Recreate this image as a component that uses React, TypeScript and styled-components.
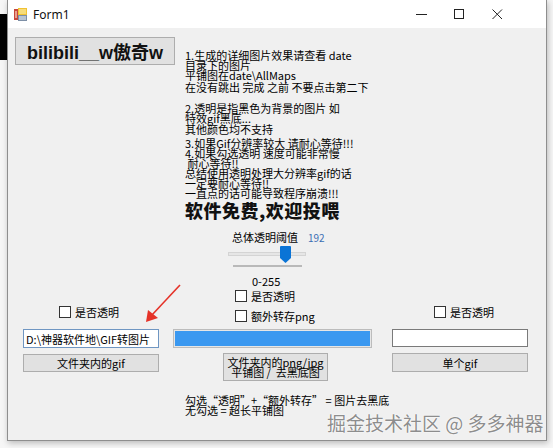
import React from 'react';
import styled, { createGlobalStyle } from 'styled-components';

const UI_FONT = '"Noto Sans CJK SC", "Liberation Sans", sans-serif';

const GlobalStyle = createGlobalStyle`
  html, body {
    margin: 0;
    padding: 0;
    background: #f4f4f4;
  }
  body {
    width: 553px;
    height: 448px;
    overflow: hidden;
    font-family: ${UI_FONT};
  }
`;

const Desktop = styled.div`
  position: relative;
  width: 553px;
  height: 448px;
  background: #f6f6f6;
  overflow: hidden;
`;

const BehindWindow = styled.div`
  position: absolute;
  left: 0;
  top: 14px;
  width: 7px;
  height: 46px;
  background: #000;
`;

const Window = styled.div`
  position: absolute;
  left: 7px;
  top: 0;
  width: 538px;
  height: 440px;
  border: 1px solid #8e8e8e;
  border-top: none;
  display: flex;
  flex-direction: column;
  box-shadow: 1px 2px 6px rgba(0, 0, 0, 0.25);
`;

const TitleBar = styled.div`
  display: flex;
  align-items: center;
  height: 28px;
  background: #fff;
  padding-left: 6px;
`;

const TitleText = styled.span`
  margin-left: 6px;
  font-family: "Noto Sans", "Liberation Sans", sans-serif;
  font-size: 12px;
  color: #111;
`;

const TitleControls = styled.div`
  margin-left: auto;
  margin-right: 30px;
  display: flex;
`;

const TitleButton = styled.div`
  width: 38px;
  height: 28px;
  display: flex;
  align-items: center;
  justify-content: center;
`;

const FormBody = styled.div`
  flex: 1;
  background: #f0f0f0;
  display: flex;
  flex-direction: column;
`;

const TopArea = styled.div`
  display: flex;
  align-items: flex-start;
  padding-left: 7px;
`;

const NameButton = styled.div`
  margin-top: 9px;
  width: 160px;
  height: 28px;
  box-sizing: border-box;
  border: 1px solid #adadad;
  background: #e1e1e1;
  display: flex;
  align-items: center;
  justify-content: center;
  font-family: "Liberation Sans", "Noto Sans CJK SC", sans-serif;
  font-weight: 700;
  font-size: 18px;
  color: #111;
`;

const InfoColumn = styled.div`
  margin-left: 10px;
  margin-top: 22px;
  display: flex;
  flex-direction: column;
`;

const InfoLine = styled.div<{ $gap?: number }>`
  margin-top: ${(p) => p.$gap ?? 0}px;
  height: 10px;
  line-height: 10px;
  font-size: 11px;
  white-space: pre;
  color: #000;
`;

const Slogan = styled.div`
  margin-top: 3px;
  height: 18px;
  line-height: 18px;
  font-size: 18px;
  font-weight: 900;
  color: #111;
  letter-spacing: 0.5px;
`;

const SliderLabelRow = styled.div`
  margin-top: 12px;
  margin-left: 47px;
  display: flex;
  align-items: center;
  height: 12px;
  font-size: 11px;
`;

const SliderValue = styled.span`
  margin-left: 10px;
  font-size: 10px;
  color: #3b6eb4;
`;

const SliderBox = styled.div`
  position: relative;
  margin-top: 4px;
  margin-left: 43px;
  width: 78px;
  height: 18px;
`;

const SliderTrack = styled.div`
  position: absolute;
  left: 0;
  right: 0;
  top: 5px;
  height: 2px;
  background: #e6e6e6;
  border: 1px solid #d4d4d4;
`;

const SliderThumb = styled.svg`
  position: absolute;
  left: 52px;
  top: -1px;
`;

const SliderTicks = styled.div`
  margin-left: 48px;
  width: 69px;
  height: 2px;
  background: #b9b9b9;
`;

const RangeText = styled.div`
  margin-top: 9px;
  margin-left: 67px;
  height: 10px;
  line-height: 10px;
  font-size: 11px;
`;

const Columns = styled.div`
  padding-left: 15px;
  display: flex;
  align-items: flex-start;
`;

const Column = styled.div<{ $width: number; $offset?: number }>`
  width: ${(p) => p.$width}px;
  margin-left: ${(p) => p.$offset ?? 0}px;
  display: flex;
  flex-direction: column;
`;

const CheckRow = styled.label<{ $gap: number; $indent: number }>`
  margin-top: ${(p) => p.$gap}px;
  padding-left: ${(p) => p.$indent}px;
  display: flex;
  align-items: center;
  height: 14px;
  font-size: 11px;
  color: #000;
`;

const CheckBox = styled.span`
  width: 10px;
  height: 10px;
  border: 1px solid #333;
  background: #fff;
  margin-right: 4px;
`;

const TextInput = styled.div<{ $focused?: boolean; $gap: number; $height: number }>`
  margin-top: ${(p) => p.$gap}px;
  height: ${(p) => p.$height}px;
  box-sizing: border-box;
  background: #fff;
  border: 1px solid ${(p) => (p.$focused ? '#6f96c2' : '#7a7a7a')};
  display: flex;
  align-items: center;
  padding-left: 2px;
  font-size: 11px;
  white-space: pre;
  color: #000;
`;

const Progress = styled.div`
  margin-top: 6px;
  height: 19px;
  box-sizing: border-box;
  border: 1px solid #bcbcbc;
  background: #e6e6e6;
  padding: 1px;
  display: flex;
`;

const ProgressFill = styled.div`
  flex: 1;
  background: #3a98f0;
`;

const FormButton = styled.div<{ $gap: number; $height: number; $width?: number; $indent?: number }>`
  margin-top: ${(p) => p.$gap}px;
  margin-left: ${(p) => p.$indent ?? 0}px;
  width: ${(p) => (p.$width ? `${p.$width}px` : 'auto')};
  height: ${(p) => p.$height}px;
  box-sizing: border-box;
  border: 1px solid #adadad;
  background: #e1e1e1;
  display: flex;
  flex-direction: column;
  align-items: center;
  justify-content: center;
  font-size: 11px;
  line-height: 10px;
  color: #000;
  white-space: pre;
`;

const Notes = styled.div`
  margin-top: 14px;
  padding-left: 177px;
  display: flex;
  flex-direction: column;
`;

const NoteLine = styled.div`
  height: 10px;
  line-height: 10px;
  font-size: 11px;
  color: #000;
  white-space: pre;
`;

const Watermark = styled.div`
  position: absolute;
  left: 327px;
  top: 411px;
  font-size: 19px;
  line-height: 24px;
  color: rgba(110, 110, 110, 0.8);
  text-shadow: 0 0 2px #fff, 0 0 1px #fff;
  white-space: pre;
`;

const Arrow = styled.svg`
  position: absolute;
  left: 140px;
  top: 280px;
`;

const AppIcon = () => (
  <svg width="13" height="13" viewBox="0 0 13 13">
    <rect x="0" y="1" width="4" height="11" fill="#c8473a" />
    <rect x="1" y="3" width="2" height="7" fill="#e9a08f" />
    <rect x="4" y="0" width="9" height="7" fill="#f1c232" />
    <rect x="5" y="1" width="7" height="5" fill="#f7dc7a" />
    <rect x="4" y="7" width="9" height="6" fill="#7d8fa6" />
    <rect x="5" y="8" width="7" height="4" fill="#b8c4d3" />
  </svg>
);

const Check: React.FC<{ label: string; gap: number; indent: number }> = ({ label, gap, indent }) => (
  <CheckRow $gap={gap} $indent={indent}>
    <CheckBox />
    <span>{label}</span>
  </CheckRow>
);

const infoLines: Array<[string, number]> = [
  ['1.生成的详细图片效果请查看 date', 0],
  ['目录下的图片', 0],
  ['平铺图在date\\AllMaps', 0],
  ['在没有跳出 完成 之前 不要点击第二下', 2],
  ['2.透明是指黑色为背景的图片 如', 11],
  ['特效gif黑底...', 0],
  ['其他颜色均不支持', 1],
  ['3.如果Gif分辨率较大 请耐心等待!!!', 4],
  ['4.如果勾选透明 速度可能非常慢', 0],
  [' 耐心等待!!', 0],
  ['总结使用透明处理大分辨率gif的话', 0],
  ['一定要耐心等待!!', 0],
  ['一直点的话可能导致程序崩溃!!!', 0],
];

export default function App() {
  return (
    <Desktop>
      <GlobalStyle />
      <BehindWindow />
      <Window>
        <TitleBar>
          <AppIcon />
          <TitleText>Form1</TitleText>
          <TitleControls>
            <TitleButton>
              <svg width="11" height="11" viewBox="0 0 11 11">
                <line x1="0" y1="5.5" x2="11" y2="5.5" stroke="#222" strokeWidth="1" />
              </svg>
            </TitleButton>
            <TitleButton>
              <svg width="11" height="11" viewBox="0 0 11 11">
                <rect x="0.5" y="0.5" width="9" height="9" fill="none" stroke="#222" strokeWidth="1" />
              </svg>
            </TitleButton>
            <TitleButton>
              <svg width="11" height="11" viewBox="0 0 11 11">
                <path d="M0.5 0.5 L10 10 M10 0.5 L0.5 10" stroke="#222" strokeWidth="1" />
              </svg>
            </TitleButton>
          </TitleControls>
        </TitleBar>

        <FormBody>
          <TopArea>
            <NameButton>bilibili__w傲奇w</NameButton>
            <InfoColumn>
              {infoLines.map(([text, gap], i) => (
                <InfoLine key={i} $gap={gap}>
                  {text}
                </InfoLine>
              ))}
              <Slogan>软件免费,欢迎投喂</Slogan>
              <SliderLabelRow>
                <span>总体透明阈值</span>
                <SliderValue>192</SliderValue>
              </SliderLabelRow>
              <SliderBox>
                <SliderTrack />
                <SliderThumb width="11" height="17" viewBox="0 0 11 17">
                  <path d="M1 0 H10 Q11 0 11 1 V12 L5.5 17 L0 12 V1 Q0 0 1 0 Z" fill="#0a74d6" />
                </SliderThumb>
              </SliderBox>
              <SliderTicks />
              <RangeText>0-255</RangeText>
            </InfoColumn>
          </TopArea>

          <Columns>
            <Column $width={136}>
              <Check label="是否透明" gap={19} indent={36} />
              <TextInput $focused $gap={10} $height={19}>
                D:\神器软件地\GIF转图片
              </TextInput>
              <FormButton $gap={6} $height={18}>
                文件夹内的gif
              </FormButton>
            </Column>
            <Column $width={199} $offset={14}>
              <Check label="是否透明" gap={3} indent={62} />
              <Check label="额外转存png" gap={6} indent={62} />
              <Progress>
                <ProgressFill />
              </Progress>
              <FormButton $gap={5} $height={28} $width={105} $indent={50}>
                <span>文件夹内的png/jpg</span>
                <span>平铺图 /  去黑底图</span>
              </FormButton>
            </Column>
            <Column $width={136} $offset={20}>
              <Check label="是否透明" gap={19} indent={42} />
              <TextInput $gap={10} $height={18} />
              <FormButton $gap={6} $height={19}>
                单个gif
              </FormButton>
            </Column>
          </Columns>

          <Notes>
            <NoteLine>勾选“透明”+“额外转存” = 图片去黑底</NoteLine>
            <NoteLine>无勾选 = 超长平铺图</NoteLine>
          </Notes>
        </FormBody>
      </Window>

      <Arrow width="45" height="46" viewBox="0 0 45 46">
        <line x1="40" y1="5" x2="11" y2="36" stroke="#e53228" strokeWidth="1.6" />
        <polygon points="6,42 8,30 18,38" fill="#e53228" />
      </Arrow>

      <Watermark>掘金技术社区 @ 多多神器</Watermark>
    </Desktop>
  );
}
